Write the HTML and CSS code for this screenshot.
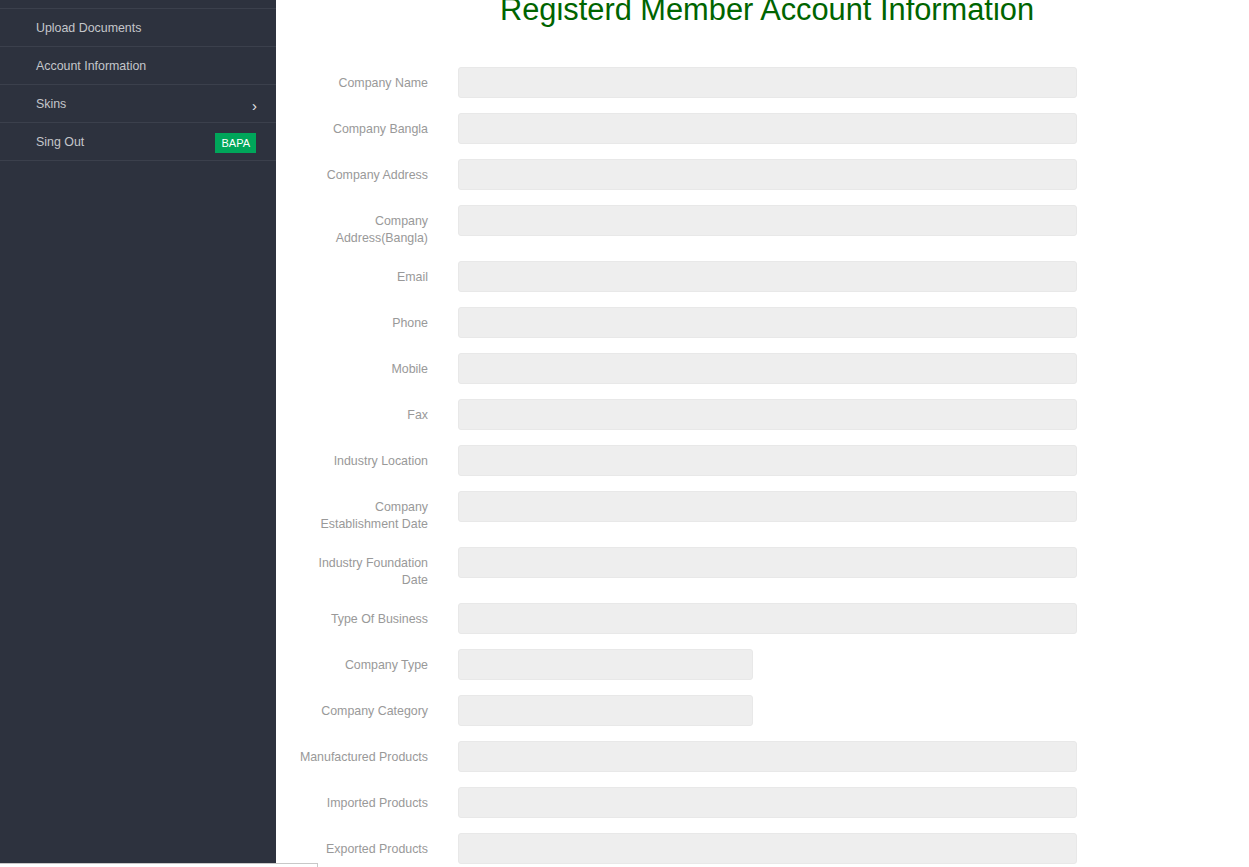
FILE: index.html
```html
<!DOCTYPE html>
<html>
<head>
<meta charset="utf-8">
<link rel="stylesheet" href="styles.css">
</head>
<body>
<div class="layout">
  <aside class="sidebar">
    <ul class="menu">
      <li class="menu-item">Dashboard</li>
      <li class="menu-item">Upload Documents</li>
      <li class="menu-item">Account Information</li>
      <li class="menu-item">Skins <span class="chev">&#8250;</span></li>
      <li class="menu-item">Sing Out <span class="badge">BAPA</span></li>
    </ul>
  </aside>
  <main class="content">
    <h1 class="title">Registerd Member Account Information</h1>
    <form class="form">
      <div class="row"><label class="lbl">Company Name</label><div class="input"></div></div>
      <div class="row"><label class="lbl">Company Bangla</label><div class="input"></div></div>
      <div class="row"><label class="lbl">Company Address</label><div class="input"></div></div>
      <div class="row"><label class="lbl">Company Address(Bangla)</label><div class="input"></div></div>
      <div class="row"><label class="lbl">Email</label><div class="input"></div></div>
      <div class="row"><label class="lbl">Phone</label><div class="input"></div></div>
      <div class="row"><label class="lbl">Mobile</label><div class="input"></div></div>
      <div class="row"><label class="lbl">Fax</label><div class="input"></div></div>
      <div class="row"><label class="lbl">Industry Location</label><div class="input"></div></div>
      <div class="row"><label class="lbl">Company Establishment Date</label><div class="input"></div></div>
      <div class="row"><label class="lbl">Industry Foundation Date</label><div class="input"></div></div>
      <div class="row"><label class="lbl">Type Of Business</label><div class="input"></div></div>
      <div class="row"><label class="lbl">Company Type</label><div class="input short"></div></div>
      <div class="row"><label class="lbl">Company Category</label><div class="input short"></div></div>
      <div class="row"><label class="lbl">Manufactured Products</label><div class="input"></div></div>
      <div class="row"><label class="lbl">Imported Products</label><div class="input"></div></div>
      <div class="row"><label class="lbl">Exported Products</label><div class="input"></div></div>
    </form>
  </main>
</div>
<div class="corner-box"></div>
</body>
</html>
```
FILE: styles.css
```css
html, body {
  margin: 0;
  padding: 0;
  height: 100%;
  overflow: hidden;
  background: #fff;
  font-family: "Liberation Sans", Arial, sans-serif;
}
.layout {
  display: grid;
  grid-template-columns: 276px 1fr;
  height: 100%;
}
.sidebar {
  background: #2d323e;
  height: 863px;
  overflow: hidden;
}
.menu {
  list-style: none;
  margin: -29px 0 0 0;
  padding: 0;
}
.menu-item {
  height: 37px;
  border-bottom: 1px solid #3b404c;
  display: flex;
  align-items: center;
  padding: 0 20px 0 36px;
  font-size: 12.4px;
  color: #c4c6ca;
  position: relative;
}
.chev {
  margin-left: auto;
  color: #e6e6e6;
  font-size: 15px;
  margin-top: 3px;
  margin-right: -1px;
}
.badge {
  margin-left: auto;
  background: #00a65a;
  color: #fff;
  font-size: 11px;
  padding: 4px 6px 3px;
  line-height: 13px;
  margin-top: 3px;
}
.content {
  padding-left: 9px;
  overflow: hidden;
}
.title {
  margin: -7px 0 40px 0;
  text-align: center;
  font-weight: normal;
  font-size: 30.8px;
  line-height: 34px;
  color: #006400;
}
.form {
  margin-left: 13px;
}
.row {
  display: flex;
  gap: 30px;
  margin-bottom: 15px;
}
.lbl {
  width: 130px;
  flex: none;
  text-align: right;
  font-size: 12.4px;
  line-height: 17px;
  padding-top: 8px;
  margin-bottom: -1px;
  color: #999;
}
.input {
  width: 619px;
  height: 31px;
  box-sizing: border-box;
  background: #eee;
  border: 1px solid #e8e8e8;
  border-radius: 3px;
}
.input.short {
  width: 295px;
}
.corner-box {
  position: fixed;
  left: 0;
  top: 863px;
  width: 317px;
  height: 20px;
  border: 1px solid #c8c8c8;
  border-left: none;
  background: #fff;
}
```
